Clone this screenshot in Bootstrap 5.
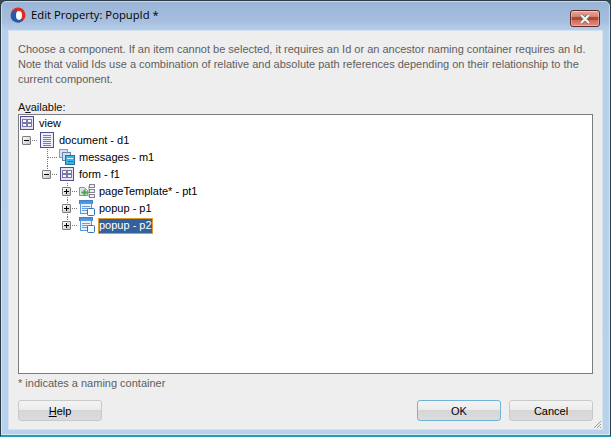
<!DOCTYPE html>
<html lang="en">
<head>
  <meta charset="UTF-8" />
  <title>Edit Property: PopupId *</title>
  <link rel="stylesheet" href="https://cdn.jsdelivr.net/npm/bootstrap@5.3.0/dist/css/bootstrap.min.css"/>
  <style>
    html, body { height: 100%; }
    body { background: #3d4a52; font-family: "Liberation Sans", Arial, sans-serif; font-size: 11px; color: #000; overflow: hidden; }
    .win-frame { width: 611px; height: 437px; border: 1px solid #2b3a44; border-bottom: 2px solid #1ea0b4; border-radius: 6px 6px 0 0;
      background: linear-gradient(180deg, #9ab4d6 0, #a6bfdf 20px, #b7d0ea 30px, #b9d2eb 100%); padding: 0 7px 5px 7px;
      box-shadow: inset 0 0 0 1px rgba(255,255,255,.45); }
    .win-title { height: 29px; gap: 5px; padding-left: 2px; font-family: "Open Sans", "Liberation Sans", sans-serif; font-size: 11.25px; color: #000; }
    .win-close { position: absolute; top: 9px; right: 10px; width: 30px; height: 17px; border: 1px solid #5b2a2a; border-radius: 3px;
      background: linear-gradient(180deg, #e9a79d 0, #dd7b6e 40%, #a0522f 41%, #a0522f 58%, #d9655a 59%, #e58a7e 100%);
      box-shadow: inset 0 0 0 1px rgba(255,255,255,.35); }
    .win-body { background: #eeeeee; border: 1px solid #d4e2f0; padding: 11px 9px 8px 9px; min-height: 0; }
    .intro-text { color: #5e5e5e; line-height: 15px; height: 45px; margin: 0 0 13px 0; }
    .avail-label { line-height: 14px; height: 14px; color: #111; }
    .tree-box { height: 267px; background: #fff; border: 1px solid #7c7c7c; overflow: hidden; }
    .tree-row { height: 17px; margin-left: -2px; line-height: 15px; padding-top: 1px; }
    .tree-row > .guide-cell { margin-top: -1px; }
    .guide-cell { width: 20px; height: 17px; position: relative; flex: none; }
    .guide-v::before { content: ""; position: absolute; left: 10px; top: 0; bottom: 0; border-left: 1px dotted #777; }
    .guide-up::before { content: ""; position: absolute; left: 10px; top: 0; height: 9px; border-left: 1px dotted #777; }
    .guide-e::after { content: ""; position: absolute; left: 11px; right: 0; top: 8px; border-top: 1px dotted #777; }
    .expand-box { position: absolute; left: 5px; top: 4px; width: 9px; height: 9px; border: 1px solid #7d7d7d; background: linear-gradient(135deg, #fff, #c4c4c4); border-radius: 1px; z-index: 1; }
    .expand-box::before { content: ""; position: absolute; left: 1px; top: 3px; width: 5px; height: 1px; background: #000; }
    .expand-plus::after { content: ""; position: absolute; left: 3px; top: 1px; width: 1px; height: 5px; background: #000; }
    .node-icon { width: 16px; height: 16px; flex: none; }
    .node-text { margin-left: 1px; padding: 0 1px; height: 15px; white-space: nowrap; }
    .node-picked { background: #33619c; color: #fff; outline: 1px solid #e39a2c; outline-offset: -1px; height: 16px; padding: 0 1px; margin-left: 1px; }
    .hint-text { color: #5e5e5e; line-height: 14px; height: 14px; margin-top: 2px; }
    .dlg-btn { width: 84px; height: 21px; padding: 0; font-size: 11px; line-height: 18px; color: #000; border: 1px solid #c9c9c9; border-radius: 3px;
      background: linear-gradient(180deg, #f4f4f4 0, #ececec 45%, #d6d6d6 46%, #dcdcdc 100%); }
    .dlg-btn-main { border-color: #6fb3d9; }
    .dlg-foot { margin-top: 10px; }
    .size-grip { position: absolute; right: 0; bottom: 0; width: 9px; height: 9px; }
  </style>
</head>
<body class="m-0">
  <svg width="0" height="0" class="position-absolute">
    <defs>
      <symbol id="i-grid" viewBox="0 0 16 16">
        <rect x="1.5" y="1.5" width="13" height="13" fill="#e4e4f2" stroke="#4f4f8f"/>
        <rect x="3.5" y="4.5" width="4" height="3" fill="#f6f6fb" stroke="#7a7aa6"/>
        <rect x="8.5" y="4.5" width="4" height="3" fill="#f6f6fb" stroke="#7a7aa6"/>
        <rect x="3.5" y="8.5" width="4" height="3" fill="#f6f6fb" stroke="#7a7aa6"/>
        <rect x="8.5" y="8.5" width="4" height="3" fill="#f6f6fb" stroke="#7a7aa6"/>
      </symbol>
      <symbol id="i-doc" viewBox="0 0 16 16">
        <rect x="1.5" y="0.5" width="13" height="15" fill="#eeeef8" stroke="#4f4f8f"/>
        <path d="M4 3.5h8M4 5.5h8M4 7.5h8M4 9.5h8M4 11.5h8M4 13.5h8" stroke="#7c7cb4" fill="none"/>
      </symbol>
      <symbol id="i-msg" viewBox="0 0 16 16">
        <rect x="0.5" y="0.5" width="8" height="8" fill="#d5e2f2" stroke="#8a9cbc"/>
        <rect x="3.5" y="3.5" width="8" height="8" fill="#cfdcee" stroke="#6d83ab"/>
        <rect x="6.5" y="6.5" width="9" height="9" fill="#35b5e6" stroke="#2a6fa8"/>
        <path d="M8 9.5h6" stroke="#e8f6fd"/>
        <path d="M9 12.5h5" stroke="#d8322c"/>
      </symbol>
      <symbol id="i-tpl" viewBox="0 0 16 16">
        <path d="M0.5 4.5h5l3 3v5h-8z" fill="#dfe3e8" stroke="#8d9299"/>
        <path d="M2.5 9.5h6M5.5 6.5v6" stroke="#49a84a" stroke-width="2" fill="none"/>
        <path d="M8.5 9.5h2M10 3v11" stroke="#8d9299" fill="none"/>
        <rect x="10.5" y="1.5" width="5" height="3" fill="#f0f1f3" stroke="#80858c"/>
        <rect x="10.5" y="6.5" width="5" height="3" fill="#f0f1f3" stroke="#80858c"/>
        <rect x="10.5" y="11.5" width="5" height="3" fill="#f0f1f3" stroke="#80858c"/>
      </symbol>
      <symbol id="i-popup" viewBox="0 0 16 16">
        <rect x="0.5" y="0.5" width="13" height="3" fill="#4d94dc" stroke="#3f82c8"/>
        <rect x="1.5" y="3.5" width="11" height="10" fill="#e6f0fa" stroke="#5f9ad8"/>
        <path d="M3 6.5h8M3 8.5h6M3 10.5h5" stroke="#6ea0d4"/>
        <rect x="8.5" y="8.5" width="7" height="7" rx="1" fill="#fff" stroke="#2f73b8"/>
      </symbol>
    </defs>
  </svg>

  <div class="win-frame d-flex flex-column position-relative">
    <div class="win-title d-flex align-items-center">
      <svg width="16" height="16" viewBox="0 0 16 16">
        <circle cx="8" cy="8" r="7.5" fill="#dd2a22"/>
        <path d="M1 11A7.5 7.5 0 0 0 13 13.5L6 3A7.5 7.5 0 0 0 1 11Z" fill="#1c5fae"/>
        <ellipse cx="9" cy="8.5" rx="3" ry="4.4" fill="#fff"/>
      </svg>
      <span>Edit Property: PopupId *</span>
    </div>
    <div class="win-close d-flex align-items-center justify-content-center">
      <svg width="14" height="10" viewBox="0 0 14 10"><path d="M3 1l8 8M11 1L3 9" stroke="#6b6b6b" stroke-width="3.6" fill="none"/><path d="M3 1l8 8M11 1L3 9" stroke="#f4f4f4" stroke-width="2.2" fill="none"/></svg>
    </div>

    <div class="win-body flex-grow-1 d-flex flex-column position-relative">
      <p class="intro-text">Choose a component. If an item cannot be selected, it requires an Id or an ancestor naming container requires an Id.<br>Note that valid Ids use a combination of relative and absolute path references depending on their relationship to the<br>current component.</p>
      <div class="avail-label">A<u>v</u>ailable:</div>
      <div class="tree-box">
        <div class="tree-row d-flex">
          <span class="guide-cell d-flex align-items-center justify-content-center"><svg class="node-icon"><use href="#i-grid"/></svg></span>
          <span class="node-text">view</span>
        </div>
        <div class="tree-row d-flex">
          <span class="guide-cell guide-e"><span class="expand-box"></span></span>
          <span class="guide-cell d-flex align-items-center justify-content-center"><svg class="node-icon"><use href="#i-doc"/></svg></span>
          <span class="node-text">document - d1</span>
        </div>
        <div class="tree-row d-flex">
          <span class="guide-cell"></span>
          <span class="guide-cell guide-v guide-e"></span>
          <span class="guide-cell d-flex align-items-center justify-content-center"><svg class="node-icon"><use href="#i-msg"/></svg></span>
          <span class="node-text">messages - m1</span>
        </div>
        <div class="tree-row d-flex">
          <span class="guide-cell"></span>
          <span class="guide-cell guide-up guide-e"><span class="expand-box"></span></span>
          <span class="guide-cell d-flex align-items-center justify-content-center"><svg class="node-icon"><use href="#i-grid"/></svg></span>
          <span class="node-text">form - f1</span>
        </div>
        <div class="tree-row d-flex">
          <span class="guide-cell"></span><span class="guide-cell"></span>
          <span class="guide-cell guide-v guide-e"><span class="expand-box expand-plus"></span></span>
          <span class="guide-cell d-flex align-items-center justify-content-center"><svg class="node-icon"><use href="#i-tpl"/></svg></span>
          <span class="node-text">pageTemplate* - pt1</span>
        </div>
        <div class="tree-row d-flex">
          <span class="guide-cell"></span><span class="guide-cell"></span>
          <span class="guide-cell guide-v guide-e"><span class="expand-box expand-plus"></span></span>
          <span class="guide-cell d-flex align-items-center justify-content-center"><svg class="node-icon"><use href="#i-popup"/></svg></span>
          <span class="node-text">popup - p1</span>
        </div>
        <div class="tree-row d-flex">
          <span class="guide-cell"></span><span class="guide-cell"></span>
          <span class="guide-cell guide-up guide-e"><span class="expand-box expand-plus"></span></span>
          <span class="guide-cell d-flex align-items-center justify-content-center"><svg class="node-icon"><use href="#i-popup"/></svg></span>
          <span class="node-text node-picked">popup - p2</span>
        </div>
      </div>
      <div class="hint-text">* indicates a naming container</div>
      <div class="dlg-foot d-flex">
        <button type="button" class="btn dlg-btn"><u>H</u>elp</button>
        <button type="button" class="btn dlg-btn dlg-btn-main ms-auto">OK</button>
        <button type="button" class="btn dlg-btn ms-2">Cancel</button>
      </div>
      <svg class="size-grip" viewBox="0 0 9 9"><path d="M8 1L1 8M8 4L4 8M8 7L7 8" stroke="#9a9a9a" fill="none"/></svg>
    </div>
  </div>
</body>
</html>
